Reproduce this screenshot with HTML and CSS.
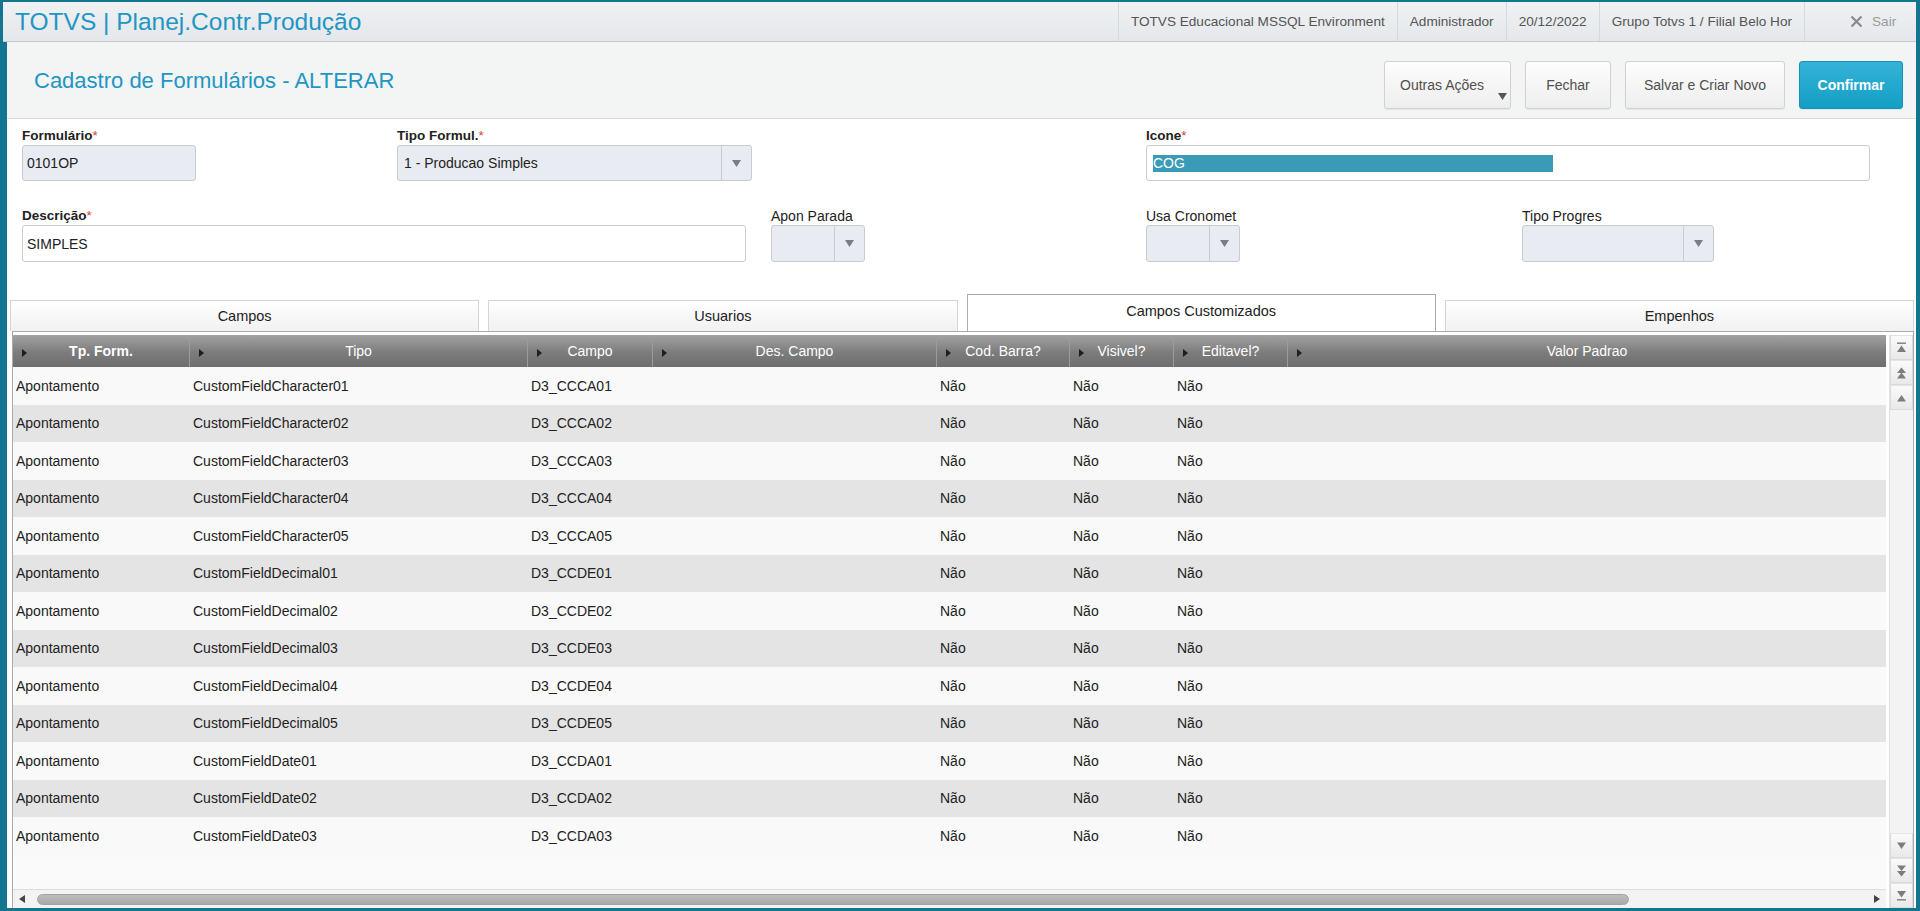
FILE: index.html
```html
<!DOCTYPE html>
<html lang="pt-BR">
<head>
<meta charset="utf-8">
<title>TOTVS | Planej.Contr.Produção</title>
<link rel="stylesheet" href="styles.css">
</head>
<body>
<div class="app">
  <header class="topbar">
    <div class="brand">TOTVS | Planej.Contr.Produção</div>
    <nav class="session">
      <span class="item">TOTVS Educacional MSSQL Environment</span>
      <span class="item">Administrador</span>
      <span class="item">20/12/2022</span>
      <span class="item">Grupo Totvs 1 / Filial Belo Hor</span>
      <span class="item exit"><svg width="13" height="13" viewBox="0 0 13 13"><path d="M1.5 1.5L11.5 11.5M11.5 1.5L1.5 11.5" stroke="#8a8a8a" stroke-width="2.2" fill="none"/></svg>Sair</span>
    </nav>
  </header>

  <main class="content">
    <section class="pagehead">
      <h1>Cadastro de Formulários - ALTERAR</h1>
      <div class="actions">
        <button class="btn btn-menu">Outras Ações<span class="caret"><svg width="9" height="7" viewBox="0 0 9 7"><path d="M0 0H9L4.5 7Z" fill="#555"/></svg></span></button>
        <button class="btn btn-close">Fechar</button>
        <button class="btn btn-save">Salvar e Criar Novo</button>
        <button class="btn btn-primary">Confirmar</button>
      </div>
    </section>

    <section class="form">
      <div class="field f-form">
        <label class="req">Formulário<span class="star">*</span></label>
        <div class="input disabled w-form">0101OP</div>
      </div>
      <div class="field f-tipo">
        <label class="req">Tipo Formul.<span class="star">*</span></label>
        <div class="input select disabled w-tipo"><span class="val">1 - Producao Simples</span><span class="arrow"><svg width="9" height="7" viewBox="0 0 9 7"><path d="M0 0H9L4.5 7Z" fill="#7a7e84"/></svg></span></div>
      </div>
      <div class="field f-icone">
        <label class="req">Icone<span class="star">*</span></label>
        <div class="input w-wide"><span class="sel">COG</span></div>
      </div>

      <div class="field f-desc">
        <label class="req">Descrição<span class="star">*</span></label>
        <div class="input tall w-wide">SIMPLES</div>
      </div>
      <div class="field f-apon">
        <label>Apon Parada</label>
        <div class="input select tall disabled w-small"><span class="val"></span><span class="arrow"><svg width="9" height="7" viewBox="0 0 9 7"><path d="M0 0H9L4.5 7Z" fill="#7a7e84"/></svg></span></div>
      </div>
      <div class="field f-crono">
        <label>Usa Cronomet</label>
        <div class="input select tall disabled w-small"><span class="val"></span><span class="arrow"><svg width="9" height="7" viewBox="0 0 9 7"><path d="M0 0H9L4.5 7Z" fill="#7a7e84"/></svg></span></div>
      </div>
      <div class="field f-prog">
        <label>Tipo Progres</label>
        <div class="input select tall disabled w-prog"><span class="val"></span><span class="arrow"><svg width="9" height="7" viewBox="0 0 9 7"><path d="M0 0H9L4.5 7Z" fill="#7a7e84"/></svg></span></div>
      </div>
    </section>

    <div class="tabs">
      <div class="tab">Campos</div>
      <div class="tab">Usuarios</div>
      <div class="tab active">Campos Customizados</div>
      <div class="tab">Empenhos</div>
    </div>

    <div class="grid">
      <div class="table">
        <div class="row head">
          <div class="hc"><i class="tri"></i><b>Tp. Form.</b></div>
          <div class="hc"><i class="tri"></i><span>Tipo</span></div>
          <div class="hc"><i class="tri"></i><span>Campo</span></div>
          <div class="hc"><i class="tri"></i><span>Des. Campo</span></div>
          <div class="hc"><i class="tri"></i><span>Cod. Barra?</span></div>
          <div class="hc"><i class="tri"></i><span>Visivel?</span></div>
          <div class="hc"><i class="tri"></i><span>Editavel?</span></div>
          <div class="hc"><i class="tri"></i><span>Valor Padrao</span></div>
        </div>
        <div class="row"><div>Apontamento</div><div>CustomFieldCharacter01</div><div>D3_CCCA01</div><div></div><div>Não</div><div>Não</div><div>Não</div><div></div></div>
        <div class="row"><div>Apontamento</div><div>CustomFieldCharacter02</div><div>D3_CCCA02</div><div></div><div>Não</div><div>Não</div><div>Não</div><div></div></div>
        <div class="row"><div>Apontamento</div><div>CustomFieldCharacter03</div><div>D3_CCCA03</div><div></div><div>Não</div><div>Não</div><div>Não</div><div></div></div>
        <div class="row"><div>Apontamento</div><div>CustomFieldCharacter04</div><div>D3_CCCA04</div><div></div><div>Não</div><div>Não</div><div>Não</div><div></div></div>
        <div class="row"><div>Apontamento</div><div>CustomFieldCharacter05</div><div>D3_CCCA05</div><div></div><div>Não</div><div>Não</div><div>Não</div><div></div></div>
        <div class="row"><div>Apontamento</div><div>CustomFieldDecimal01</div><div>D3_CCDE01</div><div></div><div>Não</div><div>Não</div><div>Não</div><div></div></div>
        <div class="row"><div>Apontamento</div><div>CustomFieldDecimal02</div><div>D3_CCDE02</div><div></div><div>Não</div><div>Não</div><div>Não</div><div></div></div>
        <div class="row"><div>Apontamento</div><div>CustomFieldDecimal03</div><div>D3_CCDE03</div><div></div><div>Não</div><div>Não</div><div>Não</div><div></div></div>
        <div class="row"><div>Apontamento</div><div>CustomFieldDecimal04</div><div>D3_CCDE04</div><div></div><div>Não</div><div>Não</div><div>Não</div><div></div></div>
        <div class="row"><div>Apontamento</div><div>CustomFieldDecimal05</div><div>D3_CCDE05</div><div></div><div>Não</div><div>Não</div><div>Não</div><div></div></div>
        <div class="row"><div>Apontamento</div><div>CustomFieldDate01</div><div>D3_CCDA01</div><div></div><div>Não</div><div>Não</div><div>Não</div><div></div></div>
        <div class="row"><div>Apontamento</div><div>CustomFieldDate02</div><div>D3_CCDA02</div><div></div><div>Não</div><div>Não</div><div>Não</div><div></div></div>
        <div class="row"><div>Apontamento</div><div>CustomFieldDate03</div><div>D3_CCDA03</div><div></div><div>Não</div><div>Não</div><div>Não</div><div></div></div>
      </div>

      <div class="vscroll">
        <div class="sgroup">
          <div class="sbtn"><svg width="11" height="11" viewBox="0 0 11 11"><rect x="1" y="0.5" width="9" height="1.4" fill="#7d7d7d"/><path d="M5.5 3.5L10 10H1Z" fill="#7d7d7d"/></svg></div>
          <div class="sbtn"><svg width="11" height="12" viewBox="0 0 11 12"><path d="M5.5 0.5L10 6H1Z M5.5 5.5L10 11.5H1Z" fill="#7d7d7d"/></svg></div>
          <div class="sbtn"><svg width="11" height="8" viewBox="0 0 11 8"><path d="M5.5 1L10 7.5H1Z" fill="#7d7d7d"/></svg></div>
        </div>
        <div class="sgroup">
          <div class="sbtn"><svg width="11" height="8" viewBox="0 0 11 8"><path d="M1 0.5H10L5.5 7Z" fill="#7d7d7d"/></svg></div>
          <div class="sbtn"><svg width="11" height="12" viewBox="0 0 11 12"><path d="M1 0.5H10L5.5 6Z M1 6H10L5.5 11.5Z" fill="#7d7d7d"/></svg></div>
          <div class="sbtn"><svg width="11" height="11" viewBox="0 0 11 11"><path d="M1 1H10L5.5 7.5Z" fill="#7d7d7d"/><rect x="1" y="9.1" width="9" height="1.4" fill="#7d7d7d"/></svg></div>
        </div>
      </div>

      <div class="hscroll">
        <svg class="harrow" width="6" height="8" viewBox="0 0 6 8"><path d="M6 0V8L0 4Z" fill="#444"/></svg>
        <div class="thumb"></div>
        <div class="hspacer"></div>
        <svg class="harrow right" width="6" height="8" viewBox="0 0 6 8"><path d="M0 0V8L6 4Z" fill="#444"/></svg>
      </div>
    </div>
  </main>
</div>
</body>
</html>
```

FILE: styles.css
```css
html, body {
  margin: 0;
  padding: 0;
}
body {
  background: #13758f;
  font-family: "Liberation Sans", Arial, sans-serif;
  color: #222;
}
.app {
  width: 1920px;
  height: 911px;
  box-sizing: border-box;
  padding: 2px 4px 3px 3px;
  display: flex;
  flex-direction: column;
  overflow: hidden;
}

/* top bar */
.topbar {
  flex: none;
  height: 39px;
  display: flex;
  justify-content: space-between;
  align-items: stretch;
  background: linear-gradient(#eff1f3, #e5e8eb);
  border-bottom: 1px solid #c4c8cc;
}
.brand {
  align-self: center;
  padding-left: 12px;
  font-size: 24.5px;
  color: #2196c4;
  white-space: nowrap;
}
.session {
  display: flex;
  align-items: stretch;
}
.session .item {
  display: flex;
  align-items: center;
  padding: 0 12px;
  border-left: 1px solid #d6d9dc;
  font-size: 13.6px;
  color: #555;
  white-space: nowrap;
}
.session .exit {
  width: 112px;
  box-sizing: border-box;
  padding-left: 45px;
  gap: 9px;
  color: #9a9a9a;
}

/* content */
.content {
  flex: 1;
  min-height: 0;
  margin-left: 4px;
  background: #fff;
  display: flex;
  flex-direction: column;
}
.pagehead {
  flex: none;
  height: 76px;
  display: flex;
  justify-content: space-between;
  padding: 0 13px 0 27px;
  background: #f3f4f4;
  border-bottom: 1px solid #d9dbdd;
}
.pagehead h1 {
  margin: 0;
  align-self: center;
  padding-top: 1px;
  font-size: 22px;
  font-weight: normal;
  color: #2196c4;
  white-space: nowrap;
}
.actions {
  display: flex;
  align-items: flex-start;
  gap: 14px;
  padding-top: 19px;
}
.btn {
  height: 48px;
  box-sizing: border-box;
  border: 1px solid #cfd1d3;
  border-radius: 3px;
  background: linear-gradient(#fdfdfd, #eeeeee);
  box-shadow: 0 1px 1px rgba(0,0,0,0.06);
  font-family: "Liberation Sans", Arial, sans-serif;
  font-size: 14px;
  color: #505050;
  display: flex;
  align-items: center;
  justify-content: center;
  white-space: nowrap;
}
.btn-menu {
  width: 127px;
  justify-content: flex-start;
  padding: 0 0 0 15px;
}
.btn-menu .caret {
  display: flex;
  margin-left: 14px;
  margin-top: 22px;
}
.btn-close { width: 86px; }
.btn-save { width: 160px; }
.btn-primary {
  width: 104px;
  background: linear-gradient(#35b2d6, #149ec6);
  border-color: #1592b6;
  color: #fff;
  font-weight: bold;
}

/* form */
.form {
  flex: none;
  display: grid;
  grid-template-columns: 375px 374px 375px 376px 1fr;
  row-gap: 27px;
  padding: 9px 0 0 15px;
}
.field label {
  display: block;
  height: 16px;
  line-height: 16px;
  margin-bottom: 1px;
  font-size: 14px;
  color: #222;
  white-space: nowrap;
}
.field label.req {
  font-size: 13.5px;
  font-weight: bold;
}
.star {
  color: #e33b2e;
  font-weight: normal;
}
.f-form { grid-column: 1; grid-row: 1; }
.f-tipo { grid-column: 2; grid-row: 1; }
.f-icone { grid-column: 4 / span 2; grid-row: 1; }
.f-desc { grid-column: 1 / span 2; grid-row: 2; }
.f-apon { grid-column: 3; grid-row: 2; }
.f-crono { grid-column: 4; grid-row: 2; }
.f-prog { grid-column: 5; grid-row: 2; }

.input {
  height: 36px;
  box-sizing: border-box;
  border: 1px solid #c8cbcf;
  border-radius: 3px;
  background: #fff;
  display: flex;
  align-items: center;
  padding-left: 4px;
  font-size: 14px;
  color: #222;
  white-space: nowrap;
}
.input.tall { height: 37px; }
.input.disabled { background: #e8ebf1; }
.w-form { width: 174px; }
.w-tipo { width: 355px; }
.w-wide { width: 724px; }
.w-small { width: 94px; }
.w-prog { width: 192px; }
.input.select {
  padding-left: 0;
  align-items: stretch;
}
.input.select .val {
  flex: 1;
  display: flex;
  align-items: center;
  padding-left: 6px;
}
.input.select .arrow {
  width: 29px;
  border-left: 1px solid #c8cbcf;
  display: flex;
  align-items: center;
  justify-content: center;
}
.sel {
  display: inline-block;
  width: 400px;
  height: 17px;
  line-height: 17px;
  margin-left: 2px;
  background: #3a9bb6;
  color: #fff;
}

/* tabs */
.tabs {
  flex: none;
  height: 37px;
  margin-top: 32px;
  padding: 0 2px 0 3px;
  display: flex;
  align-items: flex-end;
  gap: 9px;
}
.tab {
  flex: 1;
  height: 31px;
  box-sizing: border-box;
  border: 1px solid #d3d5d7;
  border-bottom: none;
  background: linear-gradient(#ffffff, #f1f1f1);
  display: flex;
  align-items: center;
  justify-content: center;
  font-size: 14.5px;
  color: #222;
}
.tab.active {
  height: 37px;
  background: #fff;
  border-color: #a9abad;
  padding-bottom: 5px;
}

/* grid */
.grid {
  flex: 1;
  min-height: 0;
  margin: 0 2px 0 5px;
  border: 1px solid #a9abad;
  border-bottom: none;
  padding-top: 3px;
  display: grid;
  grid-template-columns: 1fr 24px;
  grid-template-rows: 1fr 19px;
  column-gap: 3px;
  background: #fff;
}
.table {
  grid-column: 1;
  grid-row: 1;
  overflow: hidden;
  background: #fafafa;
}
.row {
  display: grid;
  grid-template-columns: 177px 338px 125px 284px 133px 104px 114px 1fr;
  height: 37.5px;
  align-items: center;
  font-size: 14px;
  color: #222;
  background: #f9f9f9;
}
.row:nth-child(odd) {
  background: #e4e4e4;
}
.row > div {
  padding-left: 3px;
  white-space: nowrap;
  overflow: hidden;
}
.row.head {
  height: 32px;
  background: linear-gradient(#a2a2a2, #7c7c7c 55%, #6e6e6e);
  color: #fff;
  align-items: stretch;
}
.row.head .hc {
  display: grid;
  grid-template-columns: 14px 1fr 14px;
  align-items: center;
  padding-left: 0;
  border-right: 1px solid #9c9c9c;
  text-align: center;
}
.row.head .hc:last-child {
  border-right: none;
}
.hc b, .hc span {
  grid-column: 2;
  white-space: nowrap;
}
.tri {
  grid-column: 1;
  justify-self: end;
  width: 0;
  height: 0;
  border-left: 5px solid #1e1e1e;
  border-top: 4px solid transparent;
  border-bottom: 4px solid transparent;
  margin-top: 4px;
}

.vscroll {
  grid-column: 2;
  grid-row: 1 / 3;
  display: flex;
  flex-direction: column;
  justify-content: space-between;
  background: #f3f3f3;
  border-left: 1px solid #e2e2e2;
}
.sgroup {
  display: flex;
  flex-direction: column;
}
.sbtn {
  height: 25px;
  box-sizing: border-box;
  border: 1px solid #dadada;
  border-top-color: #e4e4e4;
  background: linear-gradient(#fafafa, #e9e9e9);
  display: flex;
  align-items: center;
  justify-content: center;
}

.hscroll {
  grid-column: 1;
  grid-row: 2;
  display: flex;
  align-items: center;
  background: #f3f3f3;
  border-top: 1px solid #dcdcdc;
}
.harrow {
  margin-left: 6px;
  flex: none;
}
.harrow.right {
  margin-left: 0;
  margin-right: 6px;
}
.thumb {
  flex: none;
  width: 1592px;
  height: 11px;
  margin-left: 12px;
  box-sizing: border-box;
  border-radius: 6px;
  background: linear-gradient(#bdbdbd, #a9a9a9);
  border: 1px solid #a3a3a3;
}
.hspacer {
  flex: 1;
}
```
